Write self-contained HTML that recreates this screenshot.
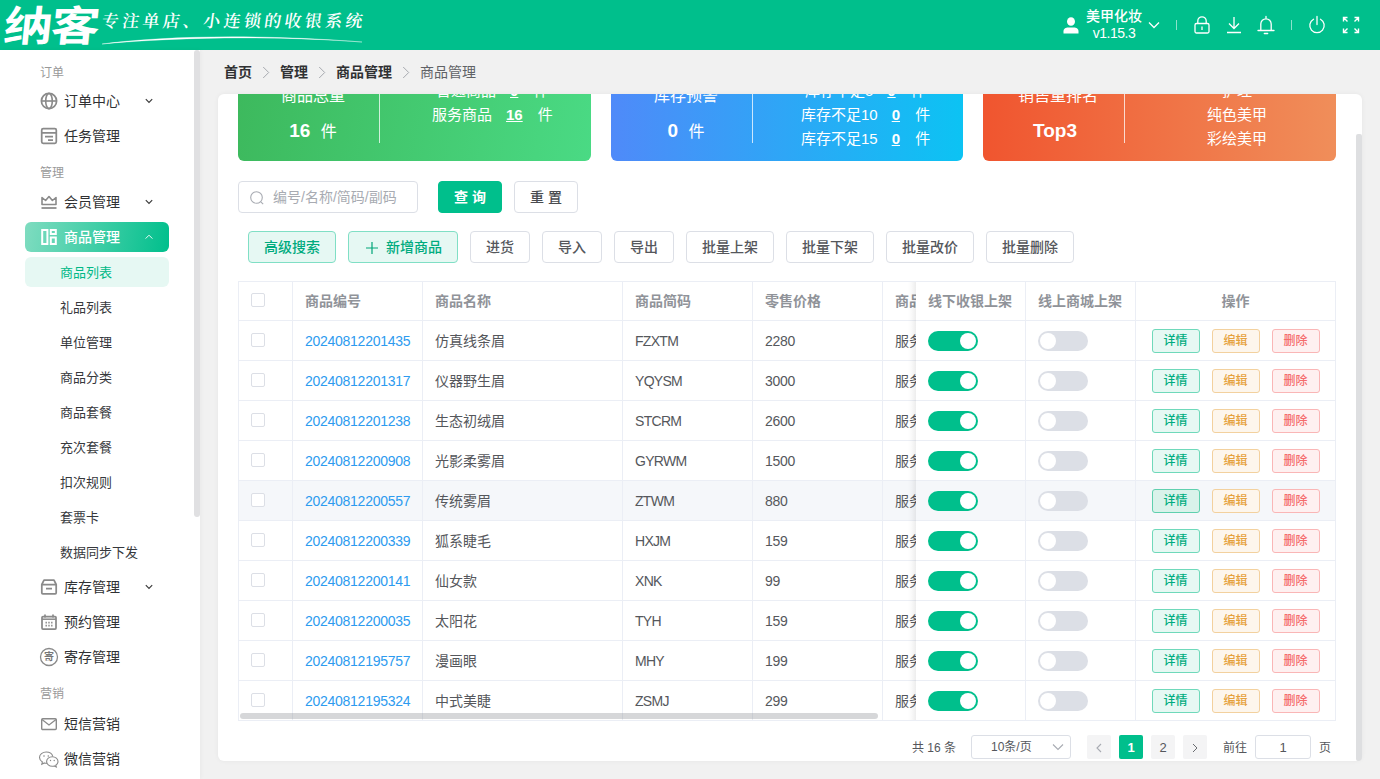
<!DOCTYPE html>
<html lang="zh-CN">
<head>
<meta charset="utf-8">
<title>纳客 - 商品管理</title>
<style>
*{box-sizing:border-box;margin:0;padding:0}
html,body{width:1380px;height:779px;overflow:hidden}
body{font-family:"Liberation Sans","Noto Sans CJK SC",sans-serif;font-size:14px;color:#303133;background:#f1f1f1;position:relative}
.abs{position:absolute}
/* header */
#hd{position:absolute;left:0;top:0;width:1380px;height:50px;background:#00bf8c;color:#fff}
#logo{position:absolute;left:4px;top:-3px;font-size:49px;font-weight:700;letter-spacing:-2px;line-height:60px;white-space:nowrap;transform:skewX(-6deg) scaleY(.85);transform-origin:0 50%}
#tag{position:absolute;left:100px;top:9px;font-size:17px;line-height:26px;font-family:"Liberation Serif","Noto Serif CJK SC",serif;font-weight:600;letter-spacing:3.300px;white-space:nowrap;transform:skewX(-8deg);transform-origin:0 100%}
#user{position:absolute;left:1085px;top:8px;font-weight:500;width:58px;text-align:center;font-size:14px;line-height:17px;white-space:nowrap}
/* sidebar */
#sb{position:absolute;left:0;top:50px;width:200px;height:729px;background:#fff;box-shadow:1px 0 4px rgba(0,0,0,.04)}
#sbbar{position:absolute;left:194px;top:50px;width:6px;height:467px;background:#e0e0e2;border-radius:3px}
.grp{position:absolute;left:40px;font-size:12px;color:#999;line-height:16px;margin-top:1px}
.mi{position:absolute;left:25px;width:144px;height:30px;line-height:30px;font-size:14px;color:#303133;border-radius:4px;padding-left:39px;white-space:nowrap}
.mi svg.ic{position:absolute;left:15px;top:6px;width:18px;height:18px;overflow:visible}
.mi svg.ar{position:absolute;left:119px;top:10px;width:10px;height:10px}
.mi.act{background:linear-gradient(100deg,#7fdcc0 0%,#00bf8c 100%);color:#fff;font-weight:500;border-radius:6px}
.si{position:absolute;left:25px;width:144px;height:30px;line-height:31px;font-size:13px;color:#36383c;border-radius:4px;padding-left:35px;white-space:nowrap}
.si.act{background:#e6f8f3;color:#00b886;border-radius:6px}
/* main */
#bc{position:absolute;left:224px;top:62px;height:20px;line-height:20px;font-size:14px;font-weight:700;color:#303133;white-space:nowrap}
#bc span.sep{display:inline-block;width:28px;text-align:center;font-weight:400;color:#aaa}
#bc span.last{font-weight:400;color:#606266}
#card{position:absolute;left:218px;top:94px;width:1144px;height:667px;background:#fff;border-radius:6px;overflow:hidden;box-shadow:0 0 5px rgba(0,0,0,.05)}
#vbar{position:absolute;left:1356px;top:134px;width:6px;height:627px;background:#dedfe1;border-radius:3px 3px 6px 3px}
.stat{position:absolute;top:94px;width:353px;height:67px;border-radius:0 0 6px 6px;color:#fff;overflow:hidden}
.stat .div{position:absolute;left:141px;top:0;width:1px;height:49px;background:rgba(255,255,255,.75)}
.stat .t{position:absolute;left:0;width:141px;text-align:center;font-size:16px;line-height:20px;top:-8px;white-space:nowrap}
.stat .n{position:absolute;left:0;width:150px;text-align:center;font-size:16px;line-height:24px;top:25px;white-space:nowrap}
.stat .n b{font-size:19px;font-weight:700;margin-right:6px}
.stat .r{position:absolute;font-size:15px;line-height:24px;white-space:nowrap}
.stat .r u{font-weight:700;margin:0 11px 0 14px}
/* form */
.btn{position:absolute;height:32px;line-height:30px;border:1px solid #dcdfe6;border-radius:4px;background:#fff;color:#55575c;font-size:14px;font-weight:500;text-align:center;white-space:nowrap}
.btn.pri{background:#00bf8c;border-color:#00bf8c;color:#fff;font-weight:700}
.btn.lt{background:#e6f8f3;border-color:#80dfc5;color:#00ab7e}
#inp{position:absolute;left:238px;top:181px;width:180px;height:32px;border:1px solid #dcdfe6;border-radius:4px;background:#fff;font-size:14px;line-height:30px;color:#a8abb2;padding-left:34px;white-space:nowrap}
/* table */
#tb{position:absolute;left:238px;top:281px;width:1098px;height:440px;border:1px solid #ebeef5;border-width:1px 1px 1px 1px;overflow:hidden}
.row{position:absolute;left:0;width:1098px;height:40px;border-bottom:1px solid #ebeef5;background:#fff}
.row.hov{background:#f5f7fa}
.c{position:absolute;top:0;height:40px;line-height:41px;border-right:1px solid #ebeef5;padding-left:12px;font-size:14px;color:#55575c;white-space:nowrap;overflow:hidden}
.row.hd{height:39px}.hd .c{color:#909399;font-weight:700;height:39px;line-height:38px}.hd .cb{top:11px}
.c a{color:#2d9bef;text-decoration:none;letter-spacing:-.27px}.c.cd{letter-spacing:-.7px}.c.pr{letter-spacing:-.25px}
.cb{position:absolute;left:12px;top:12px;width:14px;height:14px;border:1px solid #dcdfe6;border-radius:2px;background:#fff}
#fix{position:absolute;left:916px;top:281px;width:420px;height:440px;overflow:hidden;background:#fff;border-top:1px solid #ebeef5;border-right:1px solid #ebeef5;border-bottom:1px solid #ebeef5}
.sw{position:absolute;top:10px;width:50px;height:20px;border-radius:10px}
.sw.on{background:#00bf8c}.sw.off{background:#dcdfe6}
.sw i{position:absolute;top:2px;width:16px;height:16px;border-radius:8px;background:#fff}
.sw.on i{left:32px}.sw.off i{left:2px}
.ob{position:absolute;top:8px;width:48px;height:24px;line-height:23px;border:1px solid;border-radius:3px;font-size:12px;text-align:center;font-weight:500;text-indent:-1px}
.ob.g{background:#e6f8f3;border-color:#6fd9ba;color:#00ad7f}
.hov .ob.g{background:#d9f2ea;border-color:#5fd0ae}
.ob.o{background:#fdf6ec;border-color:#f3d19e;color:#e6a23c}
.ob.r{background:#fef0f0;border-color:#fab6b6;color:#f56c6c}
#hbar{position:absolute;left:240px;top:713px;width:638px;height:6px;border-radius:3px;background:rgba(140,143,150,.36)}
/* pager */
.pg{position:absolute;top:736px;height:24px;line-height:24px;font-size:12px;color:#55575c;white-space:nowrap}
.pb{position:absolute;top:735px;width:24px;height:24px;line-height:25px;background:#f4f4f5;border-radius:2px;text-align:center;font-size:13px;color:#55575c}
.pb.on{background:#00bf8c;color:#fff;font-weight:700}
</style>
</head>
<body>
<div id="hd">
  <div id="logo">纳客</div>
  <div id="tag">专注单店、小连锁的收银系统</div>
  <svg class="abs" style="left:100px;top:30px" width="270" height="16" viewBox="0 0 270 16"><path d="M2 14 C60 6.500,150 3.500,262 12 C170 5.200,70 7.500,2 14Z" fill="#fff" stroke="#fff" stroke-width=".35"/></svg>
  <svg class="abs" style="left:1062px;top:15px" width="18" height="20" viewBox="0 0 18 20"><ellipse cx="9" cy="6.5" rx="4" ry="4.3" fill="#fff"/><path d="M1.5 18.5v-2.3c0-2.6 2.4-3.7 4.6-3.7h5.8c2.2 0 4.6 1.100 4.600 3.700v2.300z" fill="#fff"/></svg>
  <div id="user">美甲化妆<br><span style="letter-spacing:-.5px;font-weight:400">v1.15.3</span></div>
  <svg class="abs" style="left:1147px;top:20px" width="14" height="10" viewBox="0 0 14 10"><path d="M2 2.500l5 5 5-5" fill="none" stroke="#fff" stroke-width="1.300"/></svg>
  <div class="abs" style="left:1176px;top:20px;width:1px;height:10px;background:rgba(255,255,255,.55)"></div>
  <svg class="abs" style="left:1192px;top:14px" width="20" height="22" viewBox="0 0 20 22"><rect x="3" y="9.500" width="14" height="9.500" rx="1.500" fill="none" stroke="#fff" stroke-width="1.300"/><path d="M5.800 9.500V7a4.200 4.200 0 0 1 8.400 0v2.500" fill="none" stroke="#fff" stroke-width="1.300"/><path d="M10 12.500v3.500" stroke="#fff" stroke-width="1.300"/></svg>
  <svg class="abs" style="left:1224px;top:14px" width="20" height="22" viewBox="0 0 20 22"><path d="M10 3v11M5 9.500l5 5 5-5M3 18.500h14" fill="none" stroke="#fff" stroke-width="1.300"/></svg>
  <svg class="abs" style="left:1256px;top:14px" width="20" height="22" viewBox="0 0 20 22"><path d="M10 2.500v1.500M4.800 16.500V10a5.200 5.200 0 0 1 10.400 0v6.500M2 16.500h16M8.300 19.500h3.400" fill="none" stroke="#fff" stroke-width="1.300" stroke-linecap="round"/></svg>
  <div class="abs" style="left:1291px;top:20px;width:1px;height:10px;background:rgba(255,255,255,.55)"></div>
  <svg class="abs" style="left:1307px;top:14px" width="20" height="22" viewBox="0 0 20 22"><path d="M6.500 5.200a7.200 7.200 0 1 0 7 0M10 2.500v8" fill="none" stroke="#fff" stroke-width="1.300" stroke-linecap="round"/></svg>
  <svg class="abs" style="left:1341px;top:15px" width="20" height="20" viewBox="0 0 20 20"><path d="M2.500 6.500V2.500H6.500M2.500 2.500l4 4M13.500 2.500h4V6.500M17.500 2.500l-4 4M2.500 13.500v4H6.500M2.500 17.500l4-4M17.500 13.500v4H13.500M17.500 17.500l-4-4" fill="none" stroke="#fff" stroke-width="1.400"/></svg>
</div>

<div id="sb"></div>
<div id="sbbar"></div>
<div class="grp" style="top:64px">订单</div>
<div class="mi" style="top:86px"><svg class="ic" viewBox="0 0 18 18"><circle cx="9" cy="9" r="7.600" fill="none" stroke="#8a8a8a" stroke-width="1.750"/><ellipse cx="9" cy="9" rx="3.300" ry="7.600" fill="none" stroke="#8a8a8a" stroke-width="1.600"/><path d="M1.400 9h15.200" stroke="#8a8a8a" stroke-width="1.600"/></svg>订单中心<svg class="ar" viewBox="0 0 10 10"><path d="M1.800 3.200l3.200 3.200 3.200-3.200" fill="none" stroke="#3a3a3a" stroke-width="1.150"/></svg></div>
<div class="mi" style="top:121px"><svg class="ic" viewBox="0 0 18 18"><rect x="1.700" y="1.700" width="14.600" height="14.600" rx="1.500" fill="none" stroke="#8a8a8a" stroke-width="1.750"/><path d="M1.700 5.800h14.600M5 9.600h8M8 13h5" stroke="#8a8a8a" stroke-width="1.750"/></svg>任务管理</div>
<div class="grp" style="top:164px">管理</div>
<div class="mi" style="top:187px"><svg class="ic" viewBox="0 0 18 18"><path d="M2 11.500V4.500l3.600 3L9 3.500l3.400 4 3.600-3v7z" fill="none" stroke="#8a8a8a" stroke-width="1.600" stroke-linejoin="round"/><path d="M1.500 15h15" stroke="#8a8a8a" stroke-width="1.750"/></svg>会员管理<svg class="ar" viewBox="0 0 10 10"><path d="M1.800 3.200l3.200 3.200 3.200-3.200" fill="none" stroke="#3a3a3a" stroke-width="1.150"/></svg></div>
<div class="mi act" style="top:222px"><svg class="ic" viewBox="0 0 18 18"><rect x="2.200" y="2" width="5.200" height="14" fill="none" stroke="#fff" stroke-width="2"/><rect x="10.800" y="2" width="5" height="4" fill="none" stroke="#fff" stroke-width="2"/><rect x="10.800" y="9.500" width="5" height="6.500" fill="none" stroke="#fff" stroke-width="2"/></svg>商品管理<svg class="ar" viewBox="0 0 10 10"><path d="M1.600 6.600L5 3.200l3.400 3.400" fill="none" stroke="#fff" stroke-width="1" opacity=".9"/></svg></div>
<div class="si act" style="top:257px">商品列表</div>
<div class="si" style="top:292px">礼品列表</div>
<div class="si" style="top:327px">单位管理</div>
<div class="si" style="top:362px">商品分类</div>
<div class="si" style="top:397px">商品套餐</div>
<div class="si" style="top:432px">充次套餐</div>
<div class="si" style="top:467px">扣次规则</div>
<div class="si" style="top:502px">套票卡</div>
<div class="si" style="top:537px">数据同步下发</div>
<div class="mi" style="top:572px"><svg class="ic" viewBox="0 0 18 18"><path d="M1.800 6.500L4 2.200h10l2.200 4.300v8.300a1 1 0 0 1-1 1H2.800a1 1 0 0 1-1-1zM1.800 6.500h14.400M6 10.500h6" fill="none" stroke="#8a8a8a" stroke-width="1.750" stroke-linejoin="round"/></svg>库存管理<svg class="ar" viewBox="0 0 10 10"><path d="M1.800 3.200l3.200 3.200 3.200-3.200" fill="none" stroke="#3a3a3a" stroke-width="1.150"/></svg></div>
<div class="mi" style="top:607px"><svg class="ic" viewBox="0 0 18 18"><rect x="2" y="3.500" width="14" height="12.500" rx="1" fill="none" stroke="#8a8a8a" stroke-width="1.750"/><path d="M2 6.200h14" stroke="#8a8a8a" stroke-width="1.500"/><path d="M5 1.500v3M13 1.500v3" stroke="#8a8a8a" stroke-width="1.750"/><path d="M5.500 9.500h1.400M8.300 9.500h1.400M11.100 9.500h1.400M5.500 12.500h1.400M8.300 12.500h1.400M11.100 12.500h1.400" stroke="#8a8a8a" stroke-width="1.750"/></svg>预约管理</div>
<div class="mi" style="top:642px"><svg class="ic" viewBox="0 0 18 18"><circle cx="9" cy="9" r="8.500" fill="none" stroke="#8a8a8a" stroke-width="1.300"/><text x="9" y="12.200" font-size="10" text-anchor="middle" fill="#777" font-family="Liberation Sans,Noto Sans CJK SC,sans-serif" font-weight="700">寄</text></svg>寄存管理</div>
<div class="grp" style="top:685px">营销</div>
<div class="mi" style="top:709px"><svg class="ic" viewBox="0 0 18 18"><rect x="1.700" y="3.700" width="14.600" height="10.800" rx="1" fill="none" stroke="#8a8a8a" stroke-width="1.400"/><path d="M2 4.500l7 5.500 7-5.500" fill="none" stroke="#8a8a8a" stroke-width="1.300"/></svg>短信营销</div>
<div class="mi" style="top:744px"><svg class="ic" style="left:13px;width:22px" viewBox="0 0 22 18"><path d="M9 13.200c-.8.100-1.700 0-2.600-.3L3.800 14.200l.6-2.200C2.600 10.900 1.500 9.300 1.500 7.500 1.500 4.400 4.500 2 8.200 2c3.300 0 6 1.900 6.600 4.500" fill="none" stroke="#8a8a8a" stroke-width="1.100"/><path d="M14.300 6.800c3.200 0 5.700 2.100 5.700 4.700 0 1.500-.8 2.800-2.200 3.700l.5 1.800-2.100-1.100c-.6.200-1.200.300-1.900.3-3.200 0-5.700-2.100-5.700-4.700s2.500-4.700 5.700-4.700z" fill="none" stroke="#8a8a8a" stroke-width="1.100"/><circle cx="6" cy="6" r=".8" fill="#8a8a8a"/><circle cx="10.300" cy="6" r=".8" fill="#8a8a8a"/><circle cx="12.500" cy="10.500" r=".7" fill="#8a8a8a"/><circle cx="16.200" cy="10.500" r=".7" fill="#8a8a8a"/></svg>微信营销</div>


<div id="bc">首页<span class="sep"><svg width="8" height="13" viewBox="0 0 8 13" style="vertical-align:-2px"><path d="M1.200 1l5.500 5.500-5.500 5.500" fill="none" stroke="#a6a9af" stroke-width="1"/></svg></span>管理<span class="sep"><svg width="8" height="13" viewBox="0 0 8 13" style="vertical-align:-2px"><path d="M1.200 1l5.500 5.500-5.500 5.500" fill="none" stroke="#a6a9af" stroke-width="1"/></svg></span>商品管理<span class="sep"><svg width="8" height="13" viewBox="0 0 8 13" style="vertical-align:-2px"><path d="M1.200 1l5.500 5.500-5.500 5.500" fill="none" stroke="#a6a9af" stroke-width="1"/></svg></span><span class="last">商品管理</span></div>
<div id="card"></div>
<div id="vbar"></div>
<div class="stat" style="left:238px;background:linear-gradient(100deg,#3db95d 0%,#4ada84 100%)"><div class="t" style="width:150px">商品总量</div><div class="n"><b>16</b> 件</div><div class="div"></div><div class="r" style="left:198px;top:-15px">普通商品<u>0</u> 件</div><div class="r" style="left:194px;top:9px">服务商品<u>16</u> 件</div></div>
<div class="stat" style="left:611px;width:352px;background:linear-gradient(90deg,#4f8af9 0%,#0cc3f3 100%)"><div class="t" style="width:150px">库存预警</div><div class="n"><b>0</b> 件</div><div class="div"></div><div class="r" style="left:194px;top:-15px">库存不足5<u>0</u> 件</div><div class="r" style="left:190px;top:9px">库存不足10<u>0</u> 件</div><div class="r" style="left:190px;top:33px">库存不足15<u>0</u> 件</div></div>
<div class="stat" style="left:983px;background:linear-gradient(90deg,#f0552f 0%,#f08e5a 100%)"><div class="t" style="width:150px">销售量排名</div><div class="n"><b>Top3</b></div><div class="div"></div><div class="r" style="left:141px;width:226px;text-align:center;top:-15px">护理</div><div class="r" style="left:141px;width:226px;text-align:center;top:9px">纯色美甲</div><div class="r" style="left:141px;width:226px;text-align:center;top:33px">彩绘美甲</div></div>

<div id="inp"><svg class="abs" style="left:10px;top:8px" width="16" height="16" viewBox="0 0 16 16"><circle cx="7.500" cy="7.500" r="5.800" fill="none" stroke="#a8abb2" stroke-width="1.100"/><path d="M11.800 11.800l2.400 2.400" stroke="#a8abb2" stroke-width="1.100"/></svg>编号/名称/简码/副码</div>
<div class="btn pri" style="left:438px;top:181px;width:64px">查 询</div>
<div class="btn" style="left:514px;top:181px;width:64px;font-weight:500;color:#4a4c50">重 置</div>
<div class="btn lt" style="left:248px;top:231px;width:88px">高级搜索</div>
<div class="btn lt" style="left:348px;top:231px;width:110px;padding-left:22px"><svg class="abs" style="left:16px;top:9px" width="14" height="14" viewBox="0 0 14 14"><path d="M7 1v12M1 7h12" stroke="#00a578" stroke-width="1.200"/></svg>新增商品</div>
<div class="btn" style="left:470px;top:231px;width:60px">进货</div>
<div class="btn" style="left:542px;top:231px;width:60px">导入</div>
<div class="btn" style="left:614px;top:231px;width:60px">导出</div>
<div class="btn" style="left:686px;top:231px;width:88px">批量上架</div>
<div class="btn" style="left:786px;top:231px;width:88px">批量下架</div>
<div class="btn" style="left:886px;top:231px;width:88px">批量改价</div>
<div class="btn" style="left:986px;top:231px;width:88px">批量删除</div>

<div id="tb">
<div class="row hd" style="top:0"><div class="c" style="left:0;width:54px"><span class="cb"></span></div><div class="c" style="left:54px;width:130px">商品编号</div><div class="c" style="left:184px;width:200px">商品名称</div><div class="c" style="left:384px;width:130px">商品简码</div><div class="c" style="left:514px;width:130px">零售价格</div><div class="c" style="left:644px;width:130px">商品类型</div></div>
<div class="row" style="top:39px"><div class="c" style="left:0;width:54px"><span class="cb"></span></div><div class="c" style="left:54px;width:130px"><a>20240812201435</a></div><div class="c" style="left:184px;width:200px">仿真线条眉</div><div class="c cd" style="left:384px;width:130px">FZXTM</div><div class="c pr" style="left:514px;width:130px">2280</div><div class="c" style="left:644px;width:130px">服务商品</div></div>
<div class="row" style="top:79px"><div class="c" style="left:0;width:54px"><span class="cb"></span></div><div class="c" style="left:54px;width:130px"><a>20240812201317</a></div><div class="c" style="left:184px;width:200px">仪器野生眉</div><div class="c cd" style="left:384px;width:130px">YQYSM</div><div class="c pr" style="left:514px;width:130px">3000</div><div class="c" style="left:644px;width:130px">服务商品</div></div>
<div class="row" style="top:119px"><div class="c" style="left:0;width:54px"><span class="cb"></span></div><div class="c" style="left:54px;width:130px"><a>20240812201238</a></div><div class="c" style="left:184px;width:200px">生态初绒眉</div><div class="c cd" style="left:384px;width:130px">STCRM</div><div class="c pr" style="left:514px;width:130px">2600</div><div class="c" style="left:644px;width:130px">服务商品</div></div>
<div class="row" style="top:159px"><div class="c" style="left:0;width:54px"><span class="cb"></span></div><div class="c" style="left:54px;width:130px"><a>20240812200908</a></div><div class="c" style="left:184px;width:200px">光影柔雾眉</div><div class="c cd" style="left:384px;width:130px">GYRWM</div><div class="c pr" style="left:514px;width:130px">1500</div><div class="c" style="left:644px;width:130px">服务商品</div></div>
<div class="row hov" style="top:199px"><div class="c" style="left:0;width:54px"><span class="cb"></span></div><div class="c" style="left:54px;width:130px"><a>20240812200557</a></div><div class="c" style="left:184px;width:200px">传统雾眉</div><div class="c cd" style="left:384px;width:130px">ZTWM</div><div class="c pr" style="left:514px;width:130px">880</div><div class="c" style="left:644px;width:130px">服务商品</div></div>
<div class="row" style="top:239px"><div class="c" style="left:0;width:54px"><span class="cb"></span></div><div class="c" style="left:54px;width:130px"><a>20240812200339</a></div><div class="c" style="left:184px;width:200px">狐系睫毛</div><div class="c cd" style="left:384px;width:130px">HXJM</div><div class="c pr" style="left:514px;width:130px">159</div><div class="c" style="left:644px;width:130px">服务商品</div></div>
<div class="row" style="top:279px"><div class="c" style="left:0;width:54px"><span class="cb"></span></div><div class="c" style="left:54px;width:130px"><a>20240812200141</a></div><div class="c" style="left:184px;width:200px">仙女款</div><div class="c cd" style="left:384px;width:130px">XNK</div><div class="c pr" style="left:514px;width:130px">99</div><div class="c" style="left:644px;width:130px">服务商品</div></div>
<div class="row" style="top:319px"><div class="c" style="left:0;width:54px"><span class="cb"></span></div><div class="c" style="left:54px;width:130px"><a>20240812200035</a></div><div class="c" style="left:184px;width:200px">太阳花</div><div class="c cd" style="left:384px;width:130px">TYH</div><div class="c pr" style="left:514px;width:130px">159</div><div class="c" style="left:644px;width:130px">服务商品</div></div>
<div class="row" style="top:359px"><div class="c" style="left:0;width:54px"><span class="cb"></span></div><div class="c" style="left:54px;width:130px"><a>20240812195757</a></div><div class="c" style="left:184px;width:200px">漫画眼</div><div class="c cd" style="left:384px;width:130px">MHY</div><div class="c pr" style="left:514px;width:130px">199</div><div class="c" style="left:644px;width:130px">服务商品</div></div>
<div class="row" style="top:399px"><div class="c" style="left:0;width:54px"><span class="cb"></span></div><div class="c" style="left:54px;width:130px"><a>20240812195324</a></div><div class="c" style="left:184px;width:200px">中式美睫</div><div class="c cd" style="left:384px;width:130px">ZSMJ</div><div class="c pr" style="left:514px;width:130px">299</div><div class="c" style="left:644px;width:130px">服务商品</div></div>
</div>
<div class="abs" style="left:908px;top:282px;width:8px;height:438px;background:linear-gradient(90deg,rgba(0,0,0,0) 0%,rgba(0,0,0,.02) 40%,rgba(0,0,0,.07) 100%)"></div>
<div id="fix">
<div class="row hd" style="top:0;width:420px"><div class="c" style="left:0;width:110px">线下收银上架</div><div class="c" style="left:110px;width:110px">线上商城上架</div><div class="c" style="left:220px;width:199px;padding-left:0;text-align:center;border-right:0">操作</div></div>
<div class="row" style="top:39px;width:420px"><div class="c" style="left:0;width:110px"><span class="sw on" style="left:12px"><i></i></span></div><div class="c" style="left:110px;width:110px"><span class="sw off" style="left:12px"><i></i></span></div><div class="c" style="left:220px;width:199px;border-right:0"><span class="ob g" style="left:16px">详情</span><span class="ob o" style="left:76px">编辑</span><span class="ob r" style="left:136px">删除</span></div></div>
<div class="row" style="top:79px;width:420px"><div class="c" style="left:0;width:110px"><span class="sw on" style="left:12px"><i></i></span></div><div class="c" style="left:110px;width:110px"><span class="sw off" style="left:12px"><i></i></span></div><div class="c" style="left:220px;width:199px;border-right:0"><span class="ob g" style="left:16px">详情</span><span class="ob o" style="left:76px">编辑</span><span class="ob r" style="left:136px">删除</span></div></div>
<div class="row" style="top:119px;width:420px"><div class="c" style="left:0;width:110px"><span class="sw on" style="left:12px"><i></i></span></div><div class="c" style="left:110px;width:110px"><span class="sw off" style="left:12px"><i></i></span></div><div class="c" style="left:220px;width:199px;border-right:0"><span class="ob g" style="left:16px">详情</span><span class="ob o" style="left:76px">编辑</span><span class="ob r" style="left:136px">删除</span></div></div>
<div class="row" style="top:159px;width:420px"><div class="c" style="left:0;width:110px"><span class="sw on" style="left:12px"><i></i></span></div><div class="c" style="left:110px;width:110px"><span class="sw off" style="left:12px"><i></i></span></div><div class="c" style="left:220px;width:199px;border-right:0"><span class="ob g" style="left:16px">详情</span><span class="ob o" style="left:76px">编辑</span><span class="ob r" style="left:136px">删除</span></div></div>
<div class="row hov" style="top:199px;width:420px"><div class="c" style="left:0;width:110px"><span class="sw on" style="left:12px"><i></i></span></div><div class="c" style="left:110px;width:110px"><span class="sw off" style="left:12px"><i></i></span></div><div class="c" style="left:220px;width:199px;border-right:0"><span class="ob g" style="left:16px">详情</span><span class="ob o" style="left:76px">编辑</span><span class="ob r" style="left:136px">删除</span></div></div>
<div class="row" style="top:239px;width:420px"><div class="c" style="left:0;width:110px"><span class="sw on" style="left:12px"><i></i></span></div><div class="c" style="left:110px;width:110px"><span class="sw off" style="left:12px"><i></i></span></div><div class="c" style="left:220px;width:199px;border-right:0"><span class="ob g" style="left:16px">详情</span><span class="ob o" style="left:76px">编辑</span><span class="ob r" style="left:136px">删除</span></div></div>
<div class="row" style="top:279px;width:420px"><div class="c" style="left:0;width:110px"><span class="sw on" style="left:12px"><i></i></span></div><div class="c" style="left:110px;width:110px"><span class="sw off" style="left:12px"><i></i></span></div><div class="c" style="left:220px;width:199px;border-right:0"><span class="ob g" style="left:16px">详情</span><span class="ob o" style="left:76px">编辑</span><span class="ob r" style="left:136px">删除</span></div></div>
<div class="row" style="top:319px;width:420px"><div class="c" style="left:0;width:110px"><span class="sw on" style="left:12px"><i></i></span></div><div class="c" style="left:110px;width:110px"><span class="sw off" style="left:12px"><i></i></span></div><div class="c" style="left:220px;width:199px;border-right:0"><span class="ob g" style="left:16px">详情</span><span class="ob o" style="left:76px">编辑</span><span class="ob r" style="left:136px">删除</span></div></div>
<div class="row" style="top:359px;width:420px"><div class="c" style="left:0;width:110px"><span class="sw on" style="left:12px"><i></i></span></div><div class="c" style="left:110px;width:110px"><span class="sw off" style="left:12px"><i></i></span></div><div class="c" style="left:220px;width:199px;border-right:0"><span class="ob g" style="left:16px">详情</span><span class="ob o" style="left:76px">编辑</span><span class="ob r" style="left:136px">删除</span></div></div>
<div class="row" style="top:399px;width:420px"><div class="c" style="left:0;width:110px"><span class="sw on" style="left:12px"><i></i></span></div><div class="c" style="left:110px;width:110px"><span class="sw off" style="left:12px"><i></i></span></div><div class="c" style="left:220px;width:199px;border-right:0"><span class="ob g" style="left:16px">详情</span><span class="ob o" style="left:76px">编辑</span><span class="ob r" style="left:136px">删除</span></div></div>
</div>
<div id="hbar"></div>

<div class="pg" style="left:912px">共 16 条</div>
<div class="abs" style="left:971px;top:735px;width:100px;height:24px;border:1px solid #dcdfe6;border-radius:3px;background:#fff;font-size:12px;line-height:23px;padding-left:19px;color:#55575c">10条/页<svg class="abs" style="left:80px;top:6px" width="12" height="10" viewBox="0 0 12 10"><path d="M1 2.500l5 5 5-5" fill="none" stroke="#a8abb2" stroke-width="1.100"/></svg></div>
<div class="pb" style="left:1087px;color:#a8abb2"><svg width="8" height="10" viewBox="0 0 8 10" style="vertical-align:-1px"><path d="M6 1L2 5l4 4" fill="none" stroke="#a8abb2" stroke-width="1.100"/></svg></div>
<div class="pb on" style="left:1119px">1</div>
<div class="pb" style="left:1151px">2</div>
<div class="pb" style="left:1183px"><svg width="8" height="10" viewBox="0 0 8 10" style="vertical-align:-1px"><path d="M2 1l4 4-4 4" fill="none" stroke="#6a6c70" stroke-width="1"/></svg></div>
<div class="pg" style="left:1223px">前往</div>
<div class="abs" style="left:1255px;top:735px;width:56px;height:24px;border:1px solid #dcdfe6;border-radius:3px;background:#fff;font-size:13px;line-height:23px;text-align:center;color:#55575c">1</div>
<div class="pg" style="left:1319px">页</div>

</body>
</html>
